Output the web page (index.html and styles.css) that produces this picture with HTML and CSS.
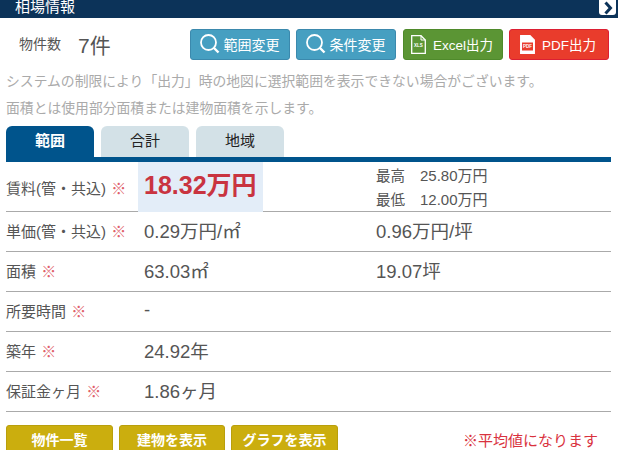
FILE: index.html
```html
<!DOCTYPE html>
<html lang="ja">
<head>
<meta charset="utf-8">
<title>相場情報</title>
<link rel="stylesheet" href="styles.css">
</head>
<body>
<header class="titlebar">
  <span class="title">相場情報</span>
  <span class="collapse"><svg width="14" height="14" viewBox="0 0 14 14"><path d="M4.5 1.5 L9.5 7 L4.5 12.5" fill="none" stroke="#0c3359" stroke-width="3"/></svg></span>
</header>
<section class="toolbar">
  <span class="count-label">物件数</span>
  <span class="count-value">7件</span>
  <div class="actions">
    <a class="btn btn-blue"><svg class="ico-search" width="24" height="24" viewBox="0 0 24 24"><circle cx="10.5" cy="10.5" r="7.5" fill="none" stroke="#fff" stroke-width="1.8"/><path d="M16 16 L20.5 20.5" stroke="#fff" stroke-width="2.4"/></svg>範囲変更</a>
    <a class="btn btn-blue"><svg class="ico-search" width="24" height="24" viewBox="0 0 24 24"><circle cx="10.5" cy="10.5" r="7.5" fill="none" stroke="#fff" stroke-width="1.8"/><path d="M16 16 L20.5 20.5" stroke="#fff" stroke-width="2.4"/></svg>条件変更</a>
    <a class="btn btn-green btn-file"><svg class="ico-file" width="15" height="19" viewBox="0 0 15 19"><path d="M.7 .7H10L14.3 5V18.3H.7Z" fill="none" stroke="#fff" stroke-width="1.3"/><path d="M10 .7V5H14.3" fill="none" stroke="#fff"/><text class="ico-label" x="7.5" y="12">XLS</text></svg>Excel出力</a>
    <a class="btn btn-red btn-file"><svg class="ico-file" width="15" height="19" viewBox="0 0 15 19"><path d="M.7 .7H10L14.3 5V18.3H.7Z" fill="#fff" stroke="#fff" stroke-width="1.3"/><rect x="2" y="7.5" width="11" height="8" fill="#e93c2c"/><text class="ico-label" x="7.5" y="13">PDF</text></svg>PDF出力</a>
  </div>
</section>
<p class="note note-first">システムの制限により「出力」時の地図に選択範囲を表示できない場合がございます。</p>
<p class="note">面積とは使用部分面積または建物面積を示します。</p>
<nav class="tabs">
  <a class="tab tab-active">範囲</a>
  <a class="tab">合計</a>
  <a class="tab">地域</a>
</nav>
<div class="table">
  <div class="row row-first">
    <div class="label">賃料(管・共込) <span class="mark">※</span></div>
    <div class="value value-main"><strong>18.32万円</strong></div>
    <div class="range">
      <div class="range-line"><span>最高</span><span class="range-num">25.80万円</span></div>
      <div class="range-line"><span>最低</span><span class="range-num">12.00万円</span></div>
    </div>
  </div>
  <div class="row">
    <div class="label">単価(管・共込) <span class="mark">※</span></div>
    <div class="value">0.29万円/㎡</div>
    <div class="value">0.96万円/坪</div>
  </div>
  <div class="row">
    <div class="label">面積 <span class="mark">※</span></div>
    <div class="value">63.03㎡</div>
    <div class="value">19.07坪</div>
  </div>
  <div class="row">
    <div class="label">所要時間 <span class="mark">※</span></div>
    <div class="value">-</div>
    <div class="value"></div>
  </div>
  <div class="row">
    <div class="label">築年 <span class="mark">※</span></div>
    <div class="value">24.92年</div>
    <div class="value"></div>
  </div>
  <div class="row">
    <div class="label">保証金ヶ月 <span class="mark">※</span></div>
    <div class="value">1.86ヶ月</div>
    <div class="value"></div>
  </div>
</div>
<footer class="footer">
  <a class="btn-gold">物件一覧</a>
  <a class="btn-gold btn-narrow">建物を表示</a>
  <a class="btn-gold">グラフを表示</a>
  <span class="footnote">※平均値になります</span>
</footer>
</body>
</html>
```
FILE: styles.css
```css
* { box-sizing: border-box; }
html, body { margin: 0; height: 450px; overflow: hidden; background: #fff; }
body { font-family: "Liberation Sans", "Noto Sans CJK JP", sans-serif; color: #555; width: 618px; }
.titlebar { height: 18px; background: #0c3359; display: flex; justify-content: space-between; padding: 0 2px 0 15px; overflow: hidden; }
.title { color: #fff; font-size: 15px; line-height: 13px; height: 18px; }
.collapse { width: 17px; height: 15px; background: #fff; border-radius: 0 0 3px 3px; display: flex; align-items: center; justify-content: center; }
.toolbar { display: flex; align-items: center; height: 32px; margin-top: 10px; padding: 0 9px 0 19px; }
.count-label { font-size: 14px; color: #555; width: 59px; padding-bottom: 2px; }
.count-value { font-size: 21px; color: #555; }
.actions { margin-left: auto; display: flex; gap: 6px; }
.btn { width: 100px; height: 31px; border-radius: 3px; display: flex; align-items: center; justify-content: center; color: #fff; font-size: 14px; border: 1px solid; white-space: nowrap; }
.btn-blue { background: #469fc1; border-color: #3b89ad; }
.btn-green { background: #5b9534; border-color: #4f8a2b; margin-left: 1px; }
.btn-red { background: #e93c2c; border-color: #dc1f33; }
.btn-file { font-size: 13.5px; }
.ico-search { margin-right: 2px; margin-left: -3px; }
.ico-file { margin-right: 7px; margin-left: -2px; }
.ico-label { fill: #fff; font-size: 4.5px; font-weight: bold; text-anchor: middle; }
.note { margin: 0 0 0 6px; font-size: 13.82px; line-height: 27px; color: #aaa; white-space: nowrap; }
.note-first { margin-top: 8px; }
.tabs { display: flex; gap: 7px; margin: 4px 7px 0 6px; height: 36px; border-bottom: 5px solid #00548c; }
.tab { width: 88px; height: 31px; border-radius: 6px 6px 0 0; background: #d3e1e7; color: #222; font-size: 15px; line-height: 30px; text-align: center; }
.tab-active { background: #00548c; color: #fff; font-weight: bold; }
.table { margin: 0 7px 0 6px; }
.row { display: grid; grid-template-columns: 132px 232px 1fr; height: 40px; padding-bottom: 3px; border-bottom: 1px solid #aaa; align-items: center; }
.row-first { height: 50px; padding-bottom: 0; align-items: stretch; }
.label { font-size: 15px; color: #555; white-space: nowrap; align-self: center; }
.mark { color: #e0606a; margin-left: 1px; }
.value { font-size: 18.5px; padding-left: 6px; color: #555; white-space: nowrap; }
.value-main { padding: 0; display: flex; align-items: center; }
.value-main strong { flex: 0 0 125px; height: 100%; padding-left: 6px; line-height: 47px; background: #e3edf8; color: #c93440; font-size: 25px; }
.range { font-size: 14.5px; color: #555; padding: 2px 0 0 6px; }
.range-line { display: flex; gap: 15px; height: 24px; line-height: 24px; }
.range-num { font-size: 15px; }
.footer { display: flex; align-items: flex-start; margin: 13px 0 0 6px; }
.btn-gold { width: 107px; height: 32px; border-radius: 3px; background: #cbae0e; border: 1px solid #b99f0c; color: #fff; font-size: 14px; font-weight: bold; line-height: 29px; text-align: center; margin-right: 6px; }
.btn-narrow { width: 106px; }
.footnote { margin-left: 119px; color: #d9323e; font-size: 15px; line-height: 32px; white-space: nowrap; }
```
